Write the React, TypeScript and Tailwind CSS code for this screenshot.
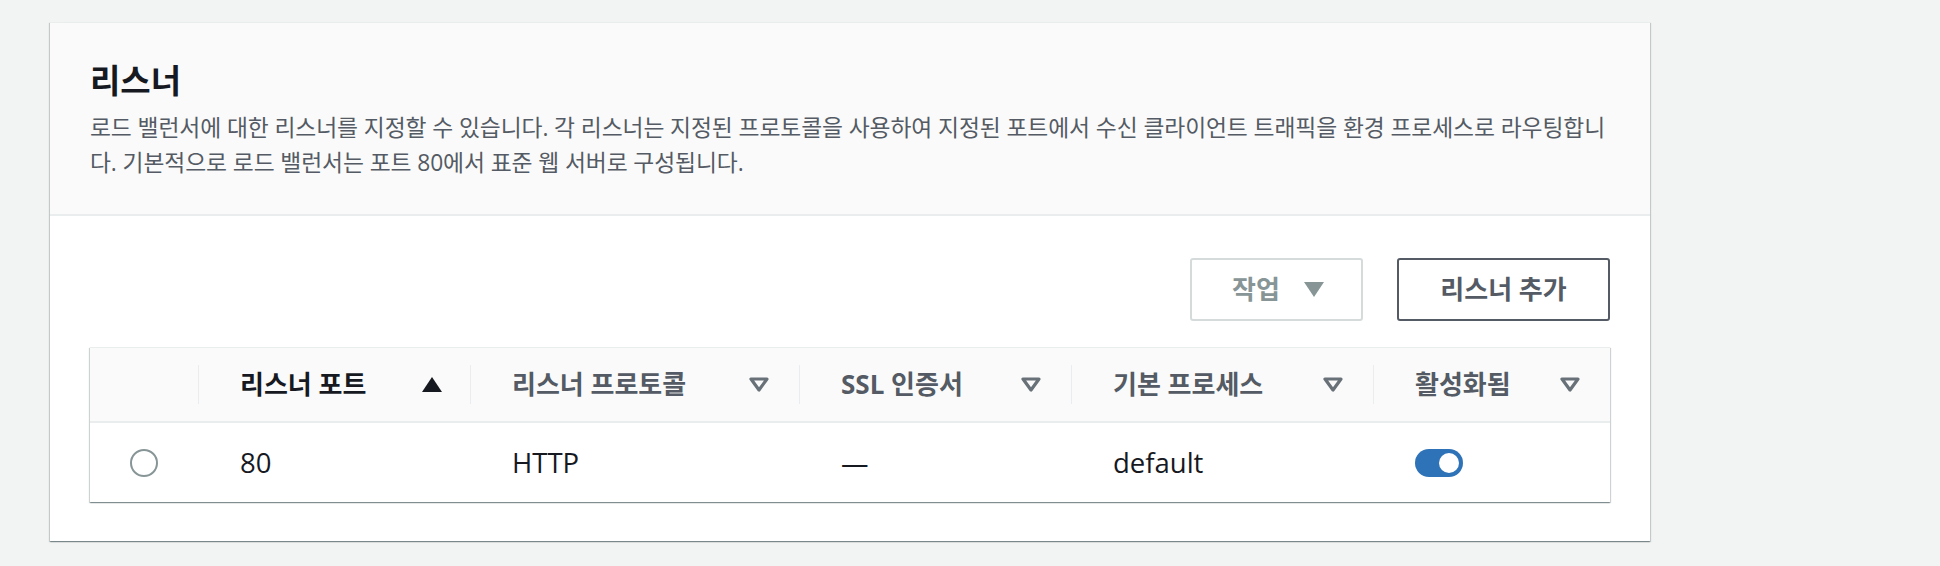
const columns = [
  { label: "리스너 포트", width: "w-[272px]", sorted: true },
  { label: "리스너 프로토콜", width: "w-[329px]", sorted: false },
  { label: "SSL 인증서", width: "w-[272px]", sorted: false },
  { label: "기본 프로세스", width: "w-[302px]", sorted: false },
  { label: "활성화됨", width: "flex-1", sorted: false },
];

function SortUp() {
  return (
    <svg width="20" height="15" viewBox="0 0 20 15" className="mr-[28px] shrink-0">
      <polygon points="0,15 20,15 10,0" fill="#16191f" />
    </svg>
  );
}

function SortNone() {
  return (
    <svg width="20" height="15" viewBox="0 0 20 15" className="mr-[30px] shrink-0">
      <polygon
        points="2,2 18,2 10,13"
        fill="none"
        stroke="#687078"
        strokeWidth="3.2"
        strokeLinejoin="round"
      />
    </svg>
  );
}

export default function App() {
  return (
    <div className="min-h-screen bg-[#f2f3f3] pl-[50px] pt-[22px] font-['Open_Sans','Noto_Sans_CJK_KR',sans-serif]">
      <section className="w-[1600px] border-t border-[#eaeded] bg-white shadow-[0_1px_1px_0_rgba(0,28,36,0.3),1px_1px_1px_0_rgba(0,28,36,0.15),-1px_1px_1px_0_rgba(0,28,36,0.15)]">
        <div className="border-b-2 border-[#eaeded] bg-[#fafafa] px-10 pt-[38px] pb-[34px]">
          <h2 className="text-[33px] font-bold leading-10 text-[#16191f]">리스너</h2>
          <p className="mt-[9px] text-[22.8px] leading-[35px] tracking-[-0.1px] text-[#545b64]">
            로드 밸런서에 대한 리스너를 지정할 수 있습니다. 각 리스너는 지정된 프로토콜을 사용하여 지정된
            포트에서 수신 클라이언트 트래픽을 환경 프로세스로 라우팅합니다. 기본적으로 로드 밸런서는 포트
            80에서 표준 웹 서버로 구성됩니다.
          </p>
        </div>

        <div className="px-10 pt-[42px] pb-[39px]">
          <div className="flex justify-end gap-[34px]">
            <button className="flex h-[63px] w-[173px] items-center rounded-[3px] border-2 border-[#d5dbdb] bg-white pl-[40px] text-[26px] font-bold text-[#879596]">
              작업
              <svg width="20" height="15" viewBox="0 0 20 15" className="ml-[24px]">
                <polygon points="0,0 20,0 10,15" fill="#879596" />
              </svg>
            </button>
            <button className="flex h-[63px] w-[213px] items-center justify-center rounded-[3px] border-2 border-[#545b64] bg-white text-[26px] font-bold text-[#545b64]">
              리스너 추가
            </button>
          </div>

          <div className="mt-[26px] border-t border-[#eaeded] bg-white shadow-[0_1px_1px_0_rgba(0,28,36,0.3),1px_1px_1px_0_rgba(0,28,36,0.15),-1px_1px_1px_0_rgba(0,28,36,0.15)]">
            <div className="flex h-[75px] border-b-2 border-[#eaeded] bg-[#fafafa]">
              <div className="w-[108px] shrink-0" />
              {columns.map((c) => (
                <div key={c.label} className={`${c.width} flex shrink-0 items-center`}>
                  <div className="h-[39px] w-px bg-[#eaeded]" />
                  <span
                    className={`ml-[41px] flex-1 text-[26px] font-bold ${
                      c.sorted ? "text-[#16191f]" : "text-[#545b64]"
                    }`}
                  >
                    {c.label}
                  </span>
                  {c.sorted ? <SortUp /> : <SortNone />}
                </div>
              ))}
            </div>
            <div className="flex h-[79px] items-center text-[27.5px] text-[#16191f]">
              <div className="flex w-[108px] shrink-0 justify-center">
                <span className="h-[28px] w-[28px] rounded-full border-2 border-[#879596] bg-white" />
              </div>
              <div className="w-[272px] shrink-0 pl-[42px]">80</div>
              <div className="w-[329px] shrink-0 pl-[42px]">HTTP</div>
              <div className="w-[272px] shrink-0 pl-[42px]">—</div>
              <div className="w-[302px] shrink-0 pl-[42px]">default</div>
              <div className="flex-1 pl-[42px]">
                <span className="flex h-[28px] w-[48px] items-center justify-end rounded-full bg-[#2e73b8] pr-[4px]">
                  <span className="h-[20px] w-[20px] rounded-full bg-white" />
                </span>
              </div>
            </div>
          </div>
        </div>
      </section>
    </div>
  );
}
